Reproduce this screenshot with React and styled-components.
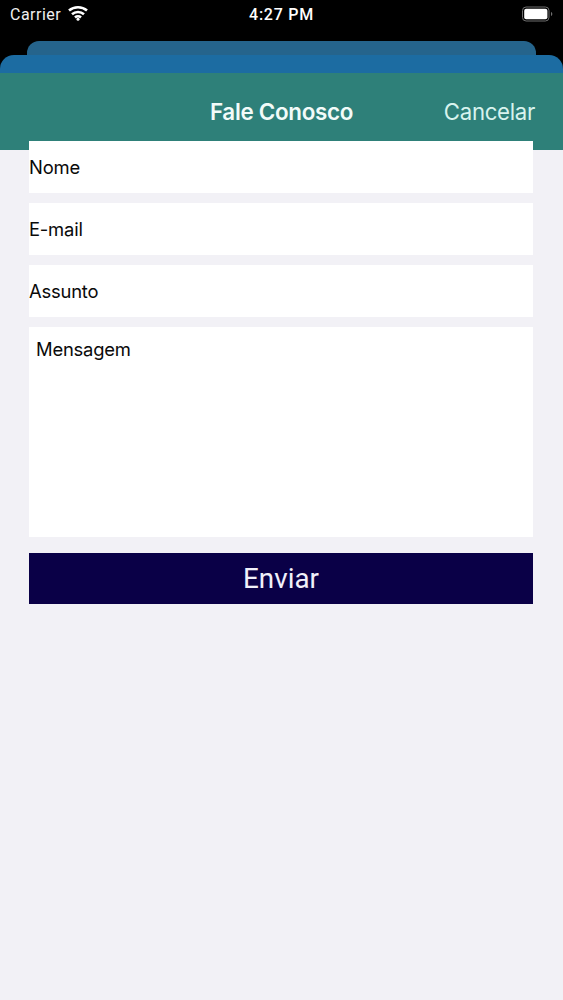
import React from "react";
import styled, { createGlobalStyle } from "styled-components";

const GlobalStyle = createGlobalStyle`
  html, body {
    margin: 0;
    padding: 0;
    background: #f2f1f6;
    font-family: "Inter", "Roboto", sans-serif;
  }
  * {
    box-sizing: border-box;
  }
`

const Page = styled.div`
  width: 563px;
  height: 1000px;
  overflow: hidden;
  background: #f2f1f6;
`

const Top = styled.div`
  background: #000;
`

const StatusBar = styled.div`
  height: 41px;
  display: grid;
  grid-template-columns: 1fr auto 1fr;
  align-items: start;
  padding: 6px 10px 0;
  color: #fff;
`

const StatusLeft = styled.div`
  display: flex;
  align-items: center;
  gap: 7px;
  font-family: "Roboto", sans-serif;
  font-size: 16px;
  line-height: 18px;
  letter-spacing: 0.5px;
  color: #f0f0f0;

  svg {
    margin-top: -4px;
  }
`

const Clock = styled.div`
  font-family: "Roboto", sans-serif;
  font-size: 16px;
  line-height: 18px;
  font-weight: 500;
  letter-spacing: 0.75px;
`

const StatusRight = styled.div`
  display: flex;
  justify-content: flex-end;
`

const BackSheet = styled.div`
  height: 14px;
  margin: 0 27px 0 27px;
  border-radius: 12px 12px 0 0;
  background: #25648c;
`

const FrontSheet = styled.div`
  height: 18px;
  border-radius: 14px 14px 0 0;
  background: #1c6ca2;
`

const NavBar = styled.header`
  height: 77px;
  display: grid;
  grid-template-columns: 1fr auto 1fr;
  align-items: start;
  padding: 25px 28px 0;
  background: #2e8079;
  color: #fff;
`

const Title = styled.h1`
  margin: 0;
  font-family: "Inter", sans-serif;
  font-size: 22.4px;
  line-height: 28px;
  font-weight: 600;
  letter-spacing: -0.3px;
  color: #f2fbf9;
`

const CancelButton = styled.button`
  justify-self: end;
  padding: 0;
  border: none;
  background: none;
  font-family: "Inter", sans-serif;
  font-size: 22.2px;
  line-height: 28px;
  font-weight: 400;
  letter-spacing: -0.3px;
  color: #d8f3ee;
`

const Form = styled.form`
  display: flex;
  flex-direction: column;
  width: 504px;
  margin: -9px 0 0 29px;
`

const Field = styled.input`
  display: block;
  width: 100%;
  height: 51.5px;
  margin-bottom: 10.5px;
  padding: 0;
  border: none;
  outline: none;
  border-radius: 0;
  background: #fff;
  font-family: "Inter", sans-serif;
  font-size: 18.4px;
  letter-spacing: -0.2px;
  color: #000;

  &::placeholder {
    color: #0a0a0a;
    opacity: 1;
  }
`

const MessageField = styled.textarea`
  display: block;
  width: 100%;
  height: 210px;
  padding: 10px 7px;
  border: none;
  outline: none;
  border-radius: 0;
  resize: none;
  background: #fff;
  font-family: "Inter", sans-serif;
  font-size: 18.4px;
  line-height: 24px;
  letter-spacing: -0.2px;
  color: #000;

  &::placeholder {
    color: #0a0a0a;
    opacity: 1;
  }
`

const SendButton = styled.button`
  height: 51px;
  margin-top: 16px;
  padding: 0;
  border: none;
  border-radius: 0;
  background: #0a0047;
  font-family: "Roboto", sans-serif;
  font-size: 27.8px;
  color: #f1f0fa;
`

const WifiIcon = () => (
  <svg width="20" height="15" viewBox="0 0 20 15" fill="none" stroke="#fff" strokeWidth="2.6">
    <path d="M1 4.600C6 .2 14 .2 19 4.600" />
    <path d="M4 8.200c3.400-3 8.600-3 12 0" />
    <path d="M7 11.500c1.700-1.500 4.300-1.500 6 0" />
    <circle cx="10" cy="13.200" r="1.500" fill="#fff" stroke="none" />
  </svg>
)

const BatteryIcon = () => (
  <svg width="31" height="16" viewBox="0 0 31 16">
    <rect x="0.5" y="1" width="26.5" height="14" rx="3.6" fill="none" stroke="#6f6f6f" />
    <rect x="2.2" y="2.8" width="23.2" height="10.4" rx="2" fill="#fff" />
    <path d="M29 6v4c.8-.3 1.3-1.100 1.300-2s-.5-1.700-1.300-2z" fill="#6f6f6f" />
  </svg>
)

export default function App() {
  return (
    <Page>
      <GlobalStyle />
      <Top>
        <StatusBar>
          <StatusLeft>
            Carrier
            <WifiIcon />
          </StatusLeft>
          <Clock>4:27 PM</Clock>
          <StatusRight>
            <BatteryIcon />
          </StatusRight>
        </StatusBar>
        <BackSheet />
        <FrontSheet />
      </Top>
      <NavBar>
        <span />
        <Title>Fale Conosco</Title>
        <CancelButton type="button">Cancelar</CancelButton>
      </NavBar>
      <Form>
        <Field placeholder="Nome" />
        <Field placeholder="E-mail" />
        <Field placeholder="Assunto" />
        <MessageField placeholder="Mensagem" />
        <SendButton type="button">Enviar</SendButton>
      </Form>
    </Page>
  )
}
